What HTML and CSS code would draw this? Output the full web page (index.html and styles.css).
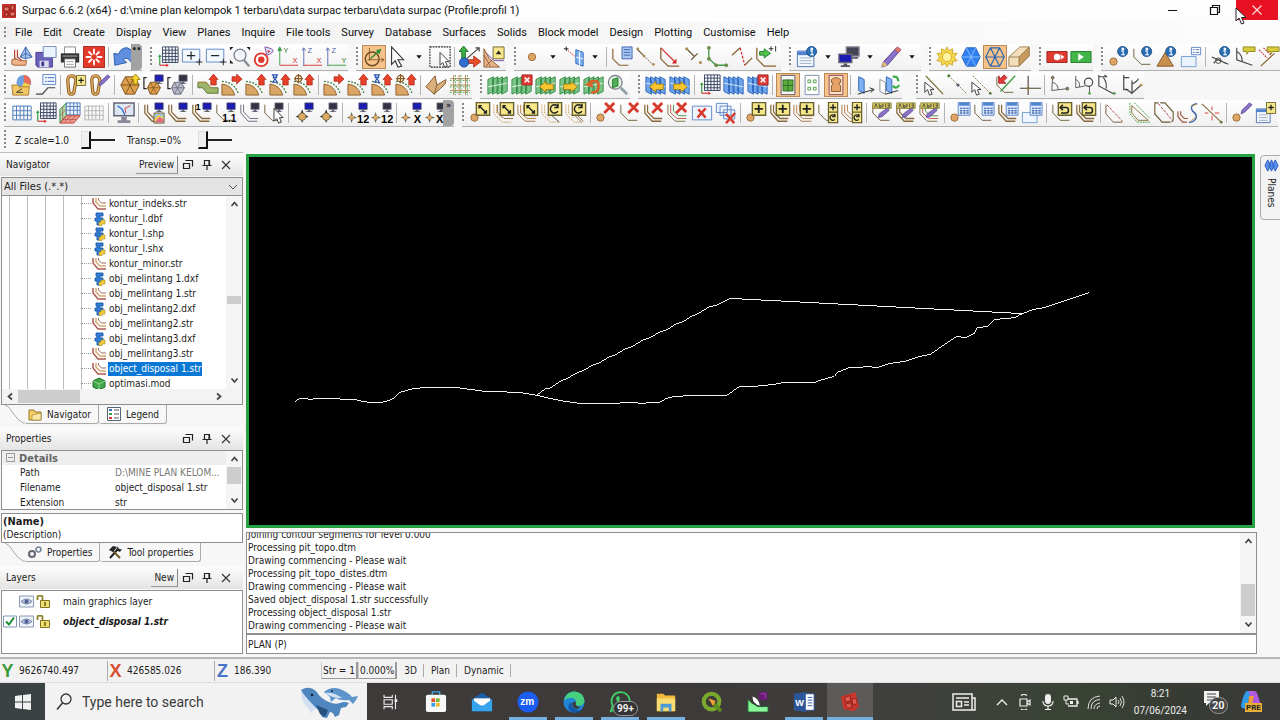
FILE: index.html
```html
<!DOCTYPE html>
<html lang="en">
<head>
<meta charset="utf-8">
<title>Surpac 6.6.2 (x64)</title>
<link rel="stylesheet" href="styles.css">
</head>
<body>
<svg class="defs" aria-hidden="true">
<defs>
<g id="ln" fill="none" stroke="#6b5a35"><path d="M2 3v9l8 8h10"/></g>
<g id="ln2" fill="none" stroke="#8a6a3c"><path d="M2 3v9l8 9h10M5 3v8l7 7h9" stroke-width="1.4"/></g>
<g id="ln3" fill="none"><path d="M1 3v10l8 8h11" stroke="#7a6a40"/><path d="M4 3v9l7 6h10" stroke="#c05040"/><path d="M7 3v7l6 5h8" stroke="#4a8a40"/></g>
<g id="lnb" fill="none"><path d="M1 3v10l8 8h11" stroke="#a07040"/><path d="M4 3v9l7 6h10M7 3v7l6 5h8" stroke="#b5793c"/></g>
<g id="lnd" fill="none" stroke="#c09040" stroke-dasharray="1.5 1"><path d="M1 3v10l9 9h10M4 3v9l6 6"/></g>
<g id="mon"><path d="M13 1h9v7h-9z" fill="#1c1cb4" stroke="#445" stroke-width=".8"/><path d="M16 8h3v2h2v1h-7v-1h2z" fill="#667"/></g>
<g id="mong"><path d="M13 1h9v7h-9z" fill="#334" stroke="#778" stroke-width=".8"/><path d="M16 8h3v2h2v1h-7v-1h2z" fill="#667"/></g>
<g id="badge"><path d="M8 .5h14.500v14H8z" fill="#f6e78a" stroke="#6a6130" stroke-width="1.5"/></g>
<g id="plus"><use href="#badge"/><path d="M15 3v9M10.500 7.500h9" stroke="#222" stroke-width="2"/></g>
<g id="diag"><use href="#badge"/><path d="M11 4l8 8M11 7V4h3M19 9v3h-3" fill="none" stroke="#222" stroke-width="1.5"/></g>
<g id="rot"><use href="#badge"/><path d="M18.500 10a4.500 4.500 0 1 1 0-5M18.500 2v4h-4" fill="none" stroke="#222" stroke-width="1.6"/></g>
<g id="undob"><use href="#badge"/><path d="M13 3l-3 3 3 3M10 6h7q2 0 2 3t-2 3h-6" fill="none" stroke="#222" stroke-width="1.7"/></g>
<g id="plusrot"><path d="M12.500 .5h10v22h-10zM12.500 11h10" fill="#f6e78a" stroke="#6a6130" stroke-width="1.4"/><path d="M17.500 2.500v6.500M14 6h7" stroke="#222" stroke-width="1.6"/><path d="M19.500 19a3 3 0 1 1 0-4M19.500 13v3h-3" fill="none" stroke="#222" stroke-width="1.4"/></g>
<g id="redx"><path d="M11 1l10 10M21 1L10 12" stroke="#d83a2c" stroke-width="3"/></g>
<g id="dot"><circle cx="6" cy="17" r="4" fill="#dfa565" stroke="#9a6a3a"/></g>
<g id="info"><circle cx="16" cy="6" r="5.500" fill="#2b6fb5" stroke="#1b4f8a"/><path d="M14.500 5.500h2v4M14.500 9.500h4M15.500 2.500h1.500v1.500h-1.500z" fill="none" stroke="#fff" stroke-width="1.2"/></g>
<g id="pencil"><path d="M2 23l2-6L17 3l4 3L8 21z" fill="#8a72c8" stroke="#54408c"/><path d="M16 4l3-3 4 3-3 3z" fill="#d77" stroke="#a55"/><path d="M2 23l2-6 4 4z" fill="#e8c070"/></g>
<g id="pens"><path d="M11 13l1-4 8-8 3 2-8 8z" fill="#8a72c8" stroke="#54408c" stroke-width=".8"/></g>
<g id="abc"><path d="M2 1h20v6H2z" fill="#d8cc5a" stroke="#8c8440"/><path d="M4 6l1.500-4L7 6M9 2v4h2V4H9M14 3h-2v2h2M16 2v4M18 2h2v4h-2M18 4h2" fill="none" stroke="#444" stroke-width=".9"/><path d="M8 17l1-4 8-6 3 2-8 7z" fill="#8a72c8" stroke="#54408c" stroke-width=".8"/></g>
<g id="tbl"><path d="M10 .5h13v14H10z" fill="#dbe8fa" stroke="#5b85c8"/><path d="M11 1h11v3H11z" fill="#4f82d0"/><path d="M12 7h2.500M15.500 7H18M19 7h2.500M12 9.500h2.500M15.500 9.500H18M19 9.500h2.500M12 12h2.500M15.500 12H18M19 12h2.500" stroke="#4a6fae" stroke-width="1.5"/></g>
<g id="axes" fill="none"><path d="M3 21V10" stroke="#35a045" stroke-width="1.3"/><path d="M1 12l2-3 2 3z" fill="#35a045"/><path d="M3 21h8" stroke="#d33" stroke-width="1.3"/><path d="M10 19l3 2-3 2z" fill="#d33"/></g>
<g id="gridd" fill="none" stroke="#33415f"><path d="M6 1h17v17H6zM9.500 1v17M13 1v17M16.500 1v17M20 1v17M6 4.500h17M6 8h17M6 11.500h17M6 15h17"/></g>
<g id="gridb" fill="none" stroke="#4878b8"><path d="M2 4.500h20v15H2zM6 4v15M10 4v15M14 4v15M18 4v15M2 9.500h20M2 14.500h20"/></g>
<g id="gridg" fill="none" stroke="#b4b4b4"><path d="M2 4.500h20v15H2zM6 4v15M10 4v15M14 4v15M18 4v15M2 9.500h20M2 14.500h20"/></g>
<g id="gpl"><path d="M1 6l6-3v16l-6 3zM6 6l6-3v16l-6 3zM11 6l6-3v16l-6 3zM16 6l6-3v16l-6 3z" fill="#7cc487" stroke="#2f8a42"/><path d="M1 14l21-4" stroke="#e6f6e6"/></g>
<g id="bpl"><path d="M1 3l6 3v16l-6-3zM6 3l6 3v16l-6-3zM11 3l6 3v16l-6-3zM16 3l6 3v16l-6-3z" fill="#6ea6ee" stroke="#2c62b8"/><path d="M1 10l21 4" stroke="#dbe9fb"/></g>
<g id="xbox"><path d="M12 1h11v11H12z" fill="#dd3b36" stroke="#a22"/><path d="M15 4l5 5M20 4l-5 5" stroke="#fff" stroke-width="1.7"/></g>
<g id="yl"><path d="M20 11h-8V8l-7 6 7 6v-3h8z" fill="#f8c52e" stroke="#96700f" stroke-width=".8"/></g>
<g id="yr"><path d="M5 11h8V8l7 6-7 6v-3H5z" fill="#f8c52e" stroke="#96700f" stroke-width=".8"/></g>
<g id="fan"><path d="M1 23V11q11 1 14 12z" fill="#dba564" stroke="#8a6130"/><path d="M1 8q14 1 18 14" fill="none" stroke="#3a7a3a" stroke-width="1.4" stroke-dasharray="2 1.5"/></g>
<g id="ru"><path d="M18 0l5 6h-2v6h-6V6h-2z" fill="#e8402a" stroke="#a32614" stroke-width=".7"/></g>
<g id="rr"><path d="M12 3h5V0l6 5.500L17 11V8h-5z" fill="#e8402a" stroke="#a32614" stroke-width=".7"/></g>
<g id="hg"><path d="M3 1h7M3 9h7M4 1l5 8M9 1L4 9M4 4h5" stroke="#2a52b0" stroke-width="1.3"/></g>
<g id="wh" fill="none" stroke="#8a5a20" stroke-width="1.3"><circle cx="6" cy="5" r="3.5"/><path d="M6 0v10M1 5h10"/></g>
<g id="hex"><path d="M7 3h10l5 9-5 10H7L2 12z" fill="#dfa04c" stroke="#7a5220"/><path d="M2 12h20M7 3l10 19M17 3L7 22" stroke="#7a5220" fill="none"/></g>
<g id="hexs"><path d="M8 9h7l4 6-4 7H8l-3-7z" fill="#dfa04c" stroke="#7a5220"/><path d="M5 15h14M8 9l7 13M15 9L8 22" stroke="#7a5220" stroke-width=".8"/><path d="M4 4H1v12h3" fill="none" stroke="#222" stroke-width="1.3"/></g>
<g id="hexg"><path d="M8 9h7l4 6-4 7H8l-3-7z" fill="#b9bccb" stroke="#667"/><path d="M5 15h14M8 9l7 13M15 9L8 22" stroke="#667" stroke-width=".8"/><path d="M4 4H1v12h3" fill="none" stroke="#222" stroke-width="1.3"/></g>
<g id="clip" fill="none"><path d="M3 7q0-5 4-5t5 5l-2 11q0 4-3 4t-3-4z" stroke="#8a5a20" stroke-width="3.6"/><path d="M3 7q0-5 4-5t5 5l-2 11q0 4-3 4t-3-4z" stroke="#e2b060" stroke-width="1.6"/></g>
<g id="str" fill="none"><path d="M1 1v5l5 6h8" stroke="#b05a50" stroke-width="1.5"/><path d="M4 1v4l4 4h6" stroke="#d8a870" stroke-width="1.5"/><path d="M6.500 1v2l3 3h4.500" stroke="#9a6a60"/></g>
<g id="fil"><path d="M4 1h7v3H8v2h3v3H8v4H5V9H3V6h2V4H4z" fill="#2f7cd6" stroke="#1c5aa8" stroke-width=".9"/><path d="M9 8h4v4h-3v1.500H7V10h2z" fill="#f2cf3a" stroke="#a88a1c" stroke-width=".6"/></g>
<g id="float" fill="none" stroke="#222" stroke-width="1.2"><path d="M3.500 1.500h7v6M1.500 4.500h6v5h-6z"/></g>
<g id="pin" fill="none" stroke="#222" stroke-width="1.2"><path d="M3.500 1.500h5v5h-5zM1.500 6.500h9M6 7v4M8 2v4"/></g>
<g id="cls" fill="none" stroke="#333" stroke-width="1.1"><path d="M2 2l8 8M10 2l-8 8"/></g>
<g id="up" fill="none" stroke="#444" stroke-width="1.7"><path d="M2.500 7l3-3.500 3 3.500"/></g>
<g id="dn" fill="none" stroke="#444" stroke-width="1.7"><path d="M2.500 3.500l3 3.500 3-3.500"/></g>
<g id="lt" fill="none" stroke="#444" stroke-width="1.7"><path d="M7 2.500l-3.500 3L7 8.500"/></g>
<g id="rt" fill="none" stroke="#444" stroke-width="1.7"><path d="M4 2.500l3.500 3-3.500 3"/></g>
<g id="arr"><path d="M5 1v19l4-4 3 7 4-1-4-7h6z" fill="#fff" stroke="#333" stroke-width="1.2"/></g>
<g id="arrs"><path d="M12 7v14l3-3 2 5 3-1-2-5h4z" fill="#fff" stroke="#333"/></g>
<g id="dia"><path d="M10 8l2 5 5 3-5 2-2 5-2-5-5-2 5-3z" fill="#333"/><circle cx="10" cy="16" r="4" fill="#e0aa60" stroke="#775"/></g>
<g id="dias"><path d="M5 11l1.500 4.500L11 17l-4.500 1.500L5 23l-1.500-4.500L0 17l3.500-1.500z" fill="#665"/><circle cx="5" cy="17" r="2.300" fill="#e0aa60"/></g>
<g id="eye"><path d="M.5.5h14v11H.5z" fill="#eef3fa" stroke="#8a9ab4"/><path d="M2 6q5.500-5 11 0-5.500 5-11 0z" fill="#b9c7de" stroke="#7486aa"/><circle cx="7.500" cy="6" r="2" fill="#4b5f92"/></g>
<g id="lock"><path d="M1.500 5V2q0-1.500 2.500-1.500T6.500 2v4" fill="none" stroke="#8c8428" stroke-width="1.8"/><path d="M4.500 5.500h9v7h-9z" fill="#efe070" stroke="#7c7424"/><path d="M9 7v4" stroke="#665c14" stroke-width="1.5"/></g>
<g id="ang" fill="none" stroke="#555"><path d="M4 3l-1 15 17-2M4 9q6 2 6 8"/><circle cx="4" cy="4" r="1.5" fill="#b08a50"/><circle cx="20" cy="16" r="1.5" fill="#7a9a60"/></g>
<g id="dd"><path d="M6 10h6l-3 4z" fill="#111"/></g>
</defs>
</svg>

<header class="titlebar">
  <svg class="app-icon" viewBox="0 0 14 14"><path d="M0 0h14v14H0z" fill="#c6332c"/><path d="M2 3h5v4H2zM9 1h3v5H9zM3 9h3v3H3zM8 8h5v4H8z" fill="#e57a70" stroke="#8c1c18"/></svg>
  <h1 class="title">Surpac 6.6.2 (x64) - d:\mine plan kelompok 1 terbaru\data surpac terbaru\data surpac (Profile:profil 1)</h1>
  <button class="win-btn" aria-label="Minimize"><svg viewBox="0 0 12 12"><path d="M1 6.500h9" stroke="#111"/></svg></button>
  <button class="win-btn" aria-label="Restore"><svg viewBox="0 0 12 12"><path d="M3.500 3V1.500h7v7H9M1.500 3.500h7v7h-7z" fill="none" stroke="#111" stroke-width="1.2"/></svg></button>
  <button class="win-btn close" aria-label="Close"><svg viewBox="0 0 12 12"><path d="M1.500 1.500l9 9M10.500 1.500l-9 9" stroke="#fbdada" stroke-width="1.2"/></svg></button>
  <svg class="pointer" viewBox="0 0 12 18"><path d="M1 1v13l3-3 2.500 6 2.500-1-2.500-5.500H11z" fill="#fff" stroke="#222"/></svg>
</header>

<nav class="menubar">
  <i class="grip"></i>
  <button>File</button><button>Edit</button><button>Create</button><button>Display</button><button>View</button><button>Planes</button><button>Inquire</button><button>File tools</button><button>Survey</button><button>Database</button><button>Surfaces</button><button>Solids</button><button>Block model</button><button>Design</button><button>Plotting</button><button>Customise</button><button>Help</button>
</nav>

<div class="toolrow">
  <div class="group"><i class="grip"></i>
    <button aria-label="Open"><svg viewBox="0 0 24 24"><path d="M4 4v9l5 5M7 4v8l5 4" fill="none" stroke="#b04030" stroke-width="1.3"/><path d="M16 1l7 11-7 2-6-2zM16 1v13M10 12l6-4 7 4" fill="#a9c6ee" stroke="#3b62b0"/><path d="M1 15q6-2 8 1h8l-1 5H4l-3-1z" fill="#f0b488" stroke="#a05a30"/></svg></button>
    <button aria-label="Save"><svg viewBox="0 0 24 24"><path d="M1 7h18v16H3l-2-2z" fill="#6a62b8" stroke="#3f3890"/><path d="M9 .5h14v12H9z" fill="#eaf2fc" stroke="#6f86b8"/><path d="M5 16h10v7H5z" fill="#dcdcf0"/><path d="M7 17h3v5H7z" fill="#3f3890"/></svg></button>
    <button aria-label="Print"><svg viewBox="0 0 24 24"><path d="M6 1h12v8H6z" fill="#fff" stroke="#888"/><path d="M2 8h20v10H2z" fill="#333"/><path d="M4 10h16v2H4z" fill="#777"/><path d="M6 14h12v9H6z" fill="#fff" stroke="#666"/><path d="M8 17h8M8 20h8" stroke="#999"/></svg></button>
    <button aria-label="Reset graphics"><svg viewBox="0 0 24 24"><path d="M.5.5h23v23H.5z" fill="#e43a2c" stroke="#a32218"/><path d="M12 3v6M12 15v6M3 12h6M15 12h6M6 6l4 4M14 14l4 4M18 6l-4 4M10 14l-4 4" stroke="#fff" stroke-width="2"/></svg></button>
    <i class="sep"></i>
    <button aria-label="Undo"><svg viewBox="0 0 24 24"><path d="M1 8l1 13 13-3-4-3q5-4 9 3 6-12-4-16-7-1-10 7z" fill="#5f8fe0" stroke="#2c56a8"/></svg></button>
    <b class="more">••</b>
  </div>
  <div class="group"><i class="grip"></i>
    <button aria-label="Grid axes"><svg viewBox="0 0 24 24"><use href="#gridd"/><use href="#axes"/></svg></button>
    <button aria-label="Zoom in"><svg viewBox="0 0 24 24"><path d="M1.500 3.500h19v14h-19z" fill="#f3f8ff" stroke="#5b85c8"/><path d="M11 6v9M6.500 10.500h9" stroke="#222" stroke-width="1.3"/><path d="M20 14v7M16.500 17.500h7" stroke="#222"/></svg></button>
    <button aria-label="Zoom out"><svg viewBox="0 0 24 24"><path d="M1.500 3.500h19v14h-19z" fill="#f3f8ff" stroke="#5b85c8"/><path d="M6.500 10.500h9" stroke="#222" stroke-width="1.3"/><path d="M20 14v7M16.500 17.500h7" stroke="#222"/></svg></button>
    <button aria-label="Zoom all"><svg viewBox="0 0 24 24"><circle cx="12" cy="10" r="6.5" fill="#f2f6fa" stroke="#778" stroke-width="1.3"/><path d="M16 15l6 7" stroke="#889" stroke-width="2.500"/><path d="M1 1h4L1 5zM23 1h-4l4 4zM1 19h4l-4-4z" fill="#222"/></svg></button>
    <button aria-label="Zoom to point"><svg viewBox="0 0 24 24"><circle cx="9" cy="15" r="7" fill="#fff" stroke="#e0382c" stroke-width="2"/><circle cx="9" cy="15" r="3.5" fill="#e0382c"/><path d="M13 1q10 2 9 5-4 4-7 4z" fill="#dfe4ff" stroke="#7a4a9a"/><path d="M16 4l3 2-3 2z" fill="#c33"/></svg></button>
    <button aria-label="Plan view"><svg viewBox="0 0 24 24"><path d="M3 21V4M1 5l2-4 2 4z" stroke="#35a045" fill="#35a045"/><path d="M3 21h20" stroke="#d33"/><text x="7" y="8" font-size="8" fill="#2a7a35">Y</text><text x="17" y="18" font-size="8" fill="#c33">X</text></svg></button>
    <button aria-label="Section view XZ"><svg viewBox="0 0 24 24"><path d="M3 22V2M1 5l2-3 2 3" stroke="#5b6fa8" fill="none"/><path d="M3 21h20" stroke="#d33"/><text x="7" y="8" font-size="8" fill="#55659a">Z</text><text x="17" y="18" font-size="8" fill="#c33">X</text></svg></button>
    <button aria-label="Section view YZ"><svg viewBox="0 0 24 24"><path d="M3 22V2M1 5l2-3 2 3" stroke="#5b6fa8" fill="none"/><path d="M3 21h20" stroke="#35a045"/><text x="7" y="8" font-size="8" fill="#55659a">Z</text><text x="18" y="18" font-size="8" fill="#2a7a35">Y</text></svg></button>
  </div>
  <div class="group"><i class="grip"></i>
    <button class="on" aria-label="Orbit"><svg viewBox="0 0 24 24"><circle cx="10" cy="14" r="7.5" fill="none" stroke="#6a4a20" stroke-width="1.5"/><path d="M7 16V2M5 15h18M20 13l3 2-3 2" stroke="#8a5a30" fill="none"/><path d="M8 14l9-8" stroke="#2f8a35" stroke-width="1.5"/><path d="M14 5l6-2-2 6z" fill="#2f8a35"/></svg></button>
    <button aria-label="Select"><svg viewBox="0 0 24 24"><use href="#arr"/></svg></button>
    <button class="drop" aria-label="Select options"><svg viewBox="0 0 18 24"><use href="#dd"/></svg></button>
    <button aria-label="Box select"><svg viewBox="0 0 24 24"><path d="M1 1h22v22H1z" fill="none" stroke="#222" stroke-width="1.2" stroke-dasharray="2 1"/><use href="#arrs"/></svg></button>
    <i class="sep"></i>
    <button aria-label="Move axes"><svg viewBox="0 0 24 24"><path d="M5 0l5 6H7v9H3V6H0z" fill="#3cae46" stroke="#1f7028"/><path d="M8 14L22 2M18 2h4v4" stroke="#444" fill="none" stroke-width="1.3"/><path d="M9 15h7v-4l8 6-8 6v-4H9z" fill="#e8502a" stroke="#a32"/><circle cx="5.500" cy="18" r="5" fill="#2f6fd0" stroke="#1c4a9a"/></svg></button>
    <button aria-label="Surface view"><svg viewBox="0 0 24 24"><path d="M1 3v20h17L7 14zM1 10l7 12M3 22l8-8" fill="#e9b48c" stroke="#8a5a30"/><path d="M4 8l8 8h11" stroke="#7a4aa0" fill="none"/><path d="M11 1h12v13H11z" fill="#f6e78a" stroke="#6a6130"/><path d="M14 9l3-4 3 4z" fill="#222"/></svg></button>
  </div>
  <div class="group roomy"><i class="grip"></i>
    <button aria-label="Point"><svg viewBox="0 0 24 24"><circle cx="12" cy="12" r="4" fill="#dfa565" stroke="#9a6a3a"/></svg></button>
    <button class="drop" aria-label="Point options"><svg viewBox="0 0 18 24"><use href="#dd"/></svg></button>
    <button aria-label="Section plane"><svg viewBox="0 0 24 24"><path d="M3 3l12 10" stroke="#d33" stroke-dasharray="2 1"/><path d="M1 3h5M3.500 .5v5" stroke="#222"/><path d="M14 4l8 3v15l-8-3z" fill="#7fb2f0" stroke="#2c62b8"/><path d="M18 6v15M14 12l8 2" stroke="#fff"/></svg></button>
    <button class="drop" aria-label="Plane options"><svg viewBox="0 0 18 24"><use href="#dd"/></svg></button>
    <i class="sep"></i>
    <button aria-label="Digitise"><svg viewBox="0 0 24 24"><path d="M2 3v11l7 7h10" fill="none" stroke="#8a6130" stroke-width="1.3"/><path d="M12 1h11v13H12z" fill="#a9c6ee" stroke="#3b62b0"/><path d="M14 4h7M14 7h7M14 10h7" stroke="#3b62b0"/></svg></button>
    <button aria-label="New segment"><svg viewBox="0 0 24 24"><path d="M2 3l8 8" stroke="#6b5a35" stroke-width="1.3"/><path d="M10 11l10 10" stroke="#6b5a35" stroke-dasharray="2 1"/><circle cx="3" cy="3" r="1.5" fill="#b08a50"/><circle cx="10" cy="11" r="1.5" fill="#b08a50"/><circle cx="20" cy="20" r="1.5" fill="#b08a50"/></svg></button>
    <button aria-label="Close segment"><svg viewBox="0 0 24 24"><path d="M2 2v12l8 8h12" fill="none" stroke="#8a6130" stroke-width="1.4"/><path d="M2 2l16 16" stroke="#d33" stroke-width="1.4"/><path d="M19 14v5h-5z" fill="#c22"/></svg></button>
    <button aria-label="Break segment"><svg viewBox="0 0 24 24"><path d="M4 3l9 9M9 15l7-7" stroke="#6b5a35" stroke-width="1.3"/><circle cx="19" cy="18" r="1.7" fill="#b08a50"/><circle cx="4" cy="3" r="1.7" fill="#b08a50"/></svg></button>
    <button aria-label="Join segment"><svg viewBox="0 0 24 24"><path d="M2 2v12l8 7h12" fill="none" stroke="#3f9a44" stroke-width="1.4"/><g fill="#5aa050" stroke="#7a6130" stroke-width=".6"><circle cx="2" cy="2" r="1.7"/><circle cx="2" cy="14" r="1.7"/><circle cx="10" cy="21" r="1.7"/><circle cx="21" cy="21" r="1.7"/></g></svg></button>
    <button aria-label="Insert point"><svg viewBox="0 0 24 24"><path d="M1 10l9-8M15 21l8-8" stroke="#8a6130" stroke-width="1.4"/><path d="M10 2l5 19" stroke="#d33" stroke-dasharray="3 1.5" stroke-width="1.4"/></svg></button>
    <button aria-label="Next string"><svg viewBox="0 0 24 24"><path d="M2 2v12l8 8h13" fill="none" stroke="#8a6130" stroke-width="1.4"/><path d="M5 6h5V3l7 5-7 5v-3H5z" fill="#4fc04a" stroke="#23802a"/><path d="M15 3h5M17.500 .5v5M22.500 0v6" stroke="#222"/></svg></button>
  </div>
  <div class="group"><i class="grip"></i>
    <button aria-label="Information"><svg viewBox="0 0 24 24"><path d="M1.500 5.500h18v17h-18z" fill="#f5f9ff" stroke="#4a6fae"/><path d="M2 6h17v4H2z" fill="#4f82d0"/><path d="M4 13h13M4 16h13M4 19h13" stroke="#9ab"/><use href="#info" x="1"/></svg></button>
    <button class="drop" aria-label="Information options"><svg viewBox="0 0 18 24"><use href="#dd"/></svg></button>
    <button aria-label="Displays"><svg viewBox="0 0 24 24"><path d="M9 1h14v10H9z" fill="#445" stroke="#889" stroke-width="1.5"/><path d="M15 12h7v2h-7z" fill="#667"/><path d="M1 9h14v9H1z" fill="#1c1cb4" stroke="#667" stroke-width="1.5"/><path d="M6 19h4v2h3v2H3v-2h3z" fill="#556"/></svg></button>
    <button class="drop" aria-label="Display options"><svg viewBox="0 0 18 24"><use href="#dd"/></svg></button>
    <button aria-label="Edit"><svg viewBox="0 0 24 24"><use href="#pencil"/></svg></button>
    <button class="drop" aria-label="Edit options"><svg viewBox="0 0 18 24"><use href="#dd"/></svg></button>
  </div>
  <div class="group"><i class="grip"></i>
    <button aria-label="Light"><svg viewBox="0 0 24 24"><path d="M12 1l2 4 4-2v5l5 0-3 4 3 4-5 1v4l-4-2-2 4-2-4-4 2v-4l-5-1 3-4-3-4 5 0V3l4 2z" fill="#f5d84a" stroke="#c49a1c" stroke-width=".8"/><circle cx="12" cy="12" r="5" fill="#fff3a0" stroke="#d0a82a"/></svg></button>
    <button aria-label="Shaded"><svg viewBox="0 0 24 24"><path d="M7 2h10l5 10-5 10H7L2 12z" fill="#2f80ee" stroke="#1c58b8"/><path d="M2 12h20M7 2l10 20M17 2L7 22" stroke="#8fc0ff"/></svg></button>
    <button class="on" aria-label="Wireframe"><svg viewBox="0 0 24 24"><path d="M7 2h10l5 10-5 10H7L2 12zM2 12h20M7 2l10 20M17 2L7 22" fill="none" stroke="#2c66b0" stroke-width="1.3"/></svg></button>
    <button aria-label="Solid block"><svg viewBox="0 0 24 24"><path d="M1 12L13 1h10v10L12 22H1z" fill="#f2dfba" stroke="#9a7a48"/><path d="M12 12L23 1v10L12 22z" fill="#c89a60" stroke="#9a7a48"/><path d="M1 12h11" stroke="#9a7a48"/></svg></button>
  </div>
  <div class="group"><i class="grip"></i>
    <button aria-label="Record macro"><svg viewBox="0 0 24 24"><path d="M1 6h22v12H1z" fill="#df3a30" stroke="#9c2018"/><circle cx="12" cy="12" r="3.5" fill="#fff"/><path d="M16 9l4 3-4 3z" fill="#fff"/></svg></button>
    <button aria-label="Play macro"><svg viewBox="0 0 24 24"><path d="M1 6h22v12H1z" fill="#43b649" stroke="#237a2a"/><path d="M9 8l6 4-6 4z" fill="#fff"/></svg></button>
  </div>
  <div class="group"><i class="grip"></i>
    <button aria-label="Point info"><svg viewBox="0 0 24 24"><use href="#dot"/><use href="#info"/></svg></button>
    <button aria-label="Segment info"><svg viewBox="0 0 24 24"><use href="#ln"/><use href="#info"/></svg></button>
    <button aria-label="Triangle info"><svg viewBox="0 0 24 24"><path d="M10 7l9 15H1z" fill="#c98f4e" stroke="#7f5526"/><use href="#info"/></svg></button>
    <button aria-label="Layer info"><svg viewBox="0 0 24 24"><path d="M1.500 11.500h16v11h-16z" fill="#eaf2fc" stroke="#6f9ad0"/><path d="M12.500 1.500h10v8h-10z" fill="#fff" stroke="#5b85c8"/><path d="M14 4h2M14 7h2M17 4h4M17 7h4" stroke="#4a6fae"/></svg></button>
    <i class="sep"></i>
    <button aria-label="Bearing"><svg viewBox="0 0 24 24"><path d="M2 12l18 8M4 19q4-6 8-3t6 3" fill="none" stroke="#444" stroke-width="1.2"/><circle cx="9" cy="16" r="3" fill="none" stroke="#444"/><use href="#info"/></svg></button>
    <button aria-label="Angle label"><svg viewBox="0 0 24 24"><path d="M3 2v13l17 6M3 6q6 3 6 11" fill="none" stroke="#444" stroke-width="1.2"/><path d="M10 1h13v5h-7l-2 3V6h-4z" fill="#d8cc3a" stroke="#8c8420"/></svg></button>
    <button aria-label="Dimension"><svg viewBox="0 0 24 24"><path d="M3 22L18 8" stroke="#8a6130" stroke-width="1.3"/><path d="M1 4l9 9M6 2l8 8" stroke="#c44" stroke-dasharray="2 1" stroke-width="1.3"/><path d="M10 1h13v5h-7l-2 3V6h-4z" fill="#d8cc3a" stroke="#8c8420"/></svg></button>
  </div>
</div>

<div class="toolrow">
  <div class="group"><i class="grip"></i>
    <button aria-label="Open chart"><svg viewBox="0 0 24 24"><circle cx="14" cy="9" r="8" fill="#6fa0e0"/><path d="M14 9V1a8 8 0 0 1 7 11z" fill="#ec6a5a"/><path d="M14 9l7 3a8 8 0 0 1-10 4z" fill="#f3d24a"/><path d="M1 12h6l2 2h11l-1 9H2z" fill="#f2c766" stroke="#a87a28"/><path d="M6 20l6-4M6 20h7" stroke="#333"/></svg></button>
    <button aria-label="Section properties"><svg viewBox="0 0 24 24"><path d="M8.500 .5h14v11h-14z" fill="#eef5ff" stroke="#5b85c8"/><path d="M11 4h2M11 8h2M14 4h7M14 8h7" stroke="#3b62b0"/><path d="M1 22h7l6-7h8" fill="none" stroke="#444" stroke-width="1.3"/></svg></button>
    <i class="sep"></i>
    <button aria-label="Add link"><svg viewBox="0 0 24 24"><use href="#clip"/><path d="M12.500 1.500h10v11h-10z" fill="#f6e78a" stroke="#6a6130"/><path d="M17.500 4v6M14.500 7h6" stroke="#222" stroke-width="1.3"/></svg></button>
    <button aria-label="Edit link"><svg viewBox="0 0 24 24"><use href="#clip"/><use href="#pens"/></svg></button>
    <i class="sep"></i>
    <button aria-label="Raise solid"><svg viewBox="0 0 24 24"><use href="#hex"/><path d="M18 0l5 6h-3v5h-4V6h-3z" fill="#f8d42e" stroke="#a08010"/></svg></button>
    <button aria-label="Display solid"><svg viewBox="0 0 24 24"><use href="#hexs"/><use href="#mon"/></svg></button>
    <button aria-label="Hide solid"><svg viewBox="0 0 24 24"><use href="#hexg"/><use href="#mong"/></svg></button>
    <i class="sep"></i>
    <button aria-label="Extend up"><svg viewBox="0 0 24 24"><path d="M1 9h9l5 6h8v6H11L6 15H1z" fill="#9db56a" stroke="#5c7430"/><path d="M1 9h9l5 6" stroke="#c08a40" fill="none"/><use href="#ru"/></svg></button>
    <button aria-label="Expand right"><svg viewBox="0 0 24 24"><use href="#fan"/><use href="#rr"/></svg></button>
    <button aria-label="Expand up"><svg viewBox="0 0 24 24"><use href="#fan"/><use href="#ru"/></svg></button>
    <button aria-label="Timed expand"><svg viewBox="0 0 24 24"><use href="#fan"/><use href="#ru"/><use href="#hg"/></svg></button>
    <button aria-label="Wheel expand"><svg viewBox="0 0 24 24"><use href="#fan"/><use href="#ru"/><use href="#wh"/></svg></button>
    <i class="sep"></i>
    <button aria-label="Contract right"><svg viewBox="0 0 24 24"><use href="#fan"/><use href="#rr"/></svg></button>
    <button aria-label="Contract up"><svg viewBox="0 0 24 24"><use href="#fan"/><use href="#ru"/></svg></button>
    <button aria-label="Timed contract"><svg viewBox="0 0 24 24"><use href="#fan"/><use href="#ru"/><use href="#hg"/></svg></button>
    <button aria-label="Wheel contract"><svg viewBox="0 0 24 24"><use href="#fan"/><use href="#ru"/><use href="#wh"/></svg></button>
    <i class="sep"></i>
    <button aria-label="Fold surface"><svg viewBox="0 0 24 24"><path d="M1 14L11 2l2 10 10-6-1 5-12 11z" fill="#d9b07c" stroke="#7f5526"/><path d="M10 22l3-10" fill="none" stroke="#7f5526"/></svg></button>
    <button aria-label="Grid strings"><svg viewBox="0 0 24 24"><path d="M5 1v22M11 1v22M18 1v22M1 5h22M1 12h22M1 18h22" stroke="#b08a50"/><path d="M7 1v22M13 1v22M20 1v22M1 7h22M1 14h22M1 20h22" stroke="#4a9a50" stroke-dasharray="2 1.5"/></svg></button>
  </div>
  <div class="group"><i class="grip"></i>
    <button aria-label="Sections"><svg viewBox="0 0 24 24"><use href="#gpl"/></svg></button>
    <button aria-label="Close sections"><svg viewBox="0 0 24 24"><use href="#gpl"/><use href="#xbox"/></svg></button>
    <button aria-label="Previous section"><svg viewBox="0 0 24 24"><use href="#gpl"/><use href="#yl"/></svg></button>
    <button aria-label="Next section"><svg viewBox="0 0 24 24"><use href="#gpl"/><use href="#yr"/></svg></button>
    <button aria-label="Reverse sections"><svg viewBox="0 0 24 24"><use href="#gpl"/><path d="M7 9q10-4 10 4t-8 7" fill="none" stroke="#d8622a" stroke-width="3"/><path d="M2 12l8-6 1 9z" fill="#d8622a"/></svg></button>
    <button aria-label="Find section"><svg viewBox="0 0 24 24"><circle cx="9" cy="9" r="7.5" fill="#dff3df" stroke="#778" stroke-width="1.3"/><path d="M6 6l6-2v9l-6 2z" fill="#4fae5a" stroke="#2a7a35"/><path d="M15 15l7 7" stroke="#8fa0a8" stroke-width="3"/></svg></button>
  </div>
  <div class="group far"><i class="grip"></i>
    <button aria-label="Previous plane"><svg viewBox="0 0 24 24"><use href="#bpl"/><use href="#yl"/></svg></button>
    <button aria-label="Next plane"><svg viewBox="0 0 24 24"><use href="#bpl"/><use href="#yr"/></svg></button>
    <i class="sep"></i>
    <button aria-label="Plane grid"><svg viewBox="0 0 24 24"><use href="#gridd"/><use href="#axes"/></svg></button>
    <button aria-label="Planes"><svg viewBox="0 0 24 24"><use href="#bpl"/></svg></button>
    <button aria-label="Close planes"><svg viewBox="0 0 24 24"><use href="#bpl"/><use href="#xbox"/></svg></button>
    <i class="sep"></i>
    <button class="on" aria-label="Tile view"><svg viewBox="0 0 24 24"><path d="M4.500 1.500h15v21h-15z" fill="#f4f7f4" stroke="#556"/><path d="M6.500 6.500h11v12h-11z" fill="#5aae3f" stroke="#2f6a20"/><path d="M12 6v13M6 12.500h12" stroke="#2f6a20"/></svg></button>
    <button aria-label="Corner view"><svg viewBox="0 0 24 24"><path d="M4.500 1.500h15v21h-15z" fill="#fff" stroke="#78a"/><path d="M7.500 6.500h3v3h-3zM13.500 6.500h3v3h-3zM7.500 14.500h3v3h-3zM13.500 14.500h3v3h-3z" fill="none" stroke="#4a9a3a"/></svg></button>
    <button class="on" aria-label="Outline view"><svg viewBox="0 0 24 24"><path d="M4.500 1.500h15v21h-15z" fill="#fbe3c4" stroke="#846"/><path d="M7 19v-6l2-3q-3 0-2-4 5-4 10 0 1 4-2 4l2 3v6z" fill="#e8a468" stroke="#7f5526"/></svg></button>
    <i class="sep"></i>
    <button aria-label="Plane move"><svg viewBox="0 0 24 24"><path d="M4 3l6 3v15l-6-3z" fill="#7fb2f0" stroke="#2c62b8"/><path d="M3 22l17-5M16 15l5 2-4 3" fill="none" stroke="#222"/></svg></button>
    <button aria-label="Plane swap"><svg viewBox="0 0 24 24"><path d="M1 6l6 3v13l-6-3z" fill="#fff" stroke="#888"/><path d="M8 3l6 3v15l-6-3z" fill="#7fb2f0" stroke="#2c62b8"/><path d="M15 3q6-1 6 5M22 12q-3 5-7 1" fill="none" stroke="#3cae46" stroke-width="2.5"/><path d="M7 22l14-4" stroke="#222"/></svg></button>
  </div>
  <div class="group"><i class="grip"></i>
    <button aria-label="Select line"><svg viewBox="0 0 24 24"><path d="M3 2l19 20" stroke="#7a6a30" stroke-width="1.4"/><path d="M2 9v11l3-3 2 6 3-1-2-5h4z" fill="#fff" stroke="#333"/></svg></button>
    <button aria-label="Point on line"><svg viewBox="0 0 24 24"><path d="M2 2l20 20" stroke="#7a6a30" stroke-dasharray="2 1.5"/><circle cx="12" cy="12" r="1.7" fill="#556"/><circle cx="2" cy="2" r="1.7" fill="#5a7a40"/></svg></button>
    <button aria-label="Pick point"><svg viewBox="0 0 24 24"><path d="M2 2l20 20" stroke="#7a6a30" stroke-dasharray="2 1.5"/><path d="M1 9v11l3-3 2 6 3-1-2-5h4z" fill="#fff" stroke="#333"/><circle cx="21" cy="21" r="1.5" fill="#5a7a40"/></svg></button>
    <button aria-label="Snap"><svg viewBox="0 0 24 24"><use href="#ln"/><path d="M22 2L6 19" stroke="#3f9a44" stroke-width="1.5"/><path d="M4 2v8h8l-3-2 4-4-3-3-4 4z" fill="#e03a3a" stroke="#a22"/></svg></button>
    <button aria-label="Cross"><svg viewBox="0 0 24 24"><path d="M10 2v21M1 15.500h23" stroke="#4a4432" stroke-width="1.2"/><circle cx="10" cy="15.500" r="1.5" fill="#8a7a40"/></svg></button>
    <i class="sep"></i>
    <button aria-label="Angle"><svg viewBox="0 0 24 24"><use href="#ang"/></svg></button>
    <button aria-label="Turn angle"><svg viewBox="0 0 24 24"><path d="M3 2v13l10-2M3 6q5 2 4 8M18 13v9" fill="none" stroke="#555"/><circle cx="17" cy="9" r="4.500" fill="none" stroke="#444" stroke-width="1.3"/><circle cx="18" cy="21" r="1.5" fill="#5aa050"/></svg></button>
    <button aria-label="Deflection"><svg viewBox="0 0 24 24"><path d="M2 1v12l17 9M2 3h9M7 4q4 5 3 12M8 1l3 2" fill="none" stroke="#444" stroke-width="1.2"/><circle cx="19" cy="21" r="1.5" fill="#5aa050"/></svg></button>
    <button aria-label="Offset angle"><svg viewBox="0 0 24 24"><path d="M3 1v16h5M3 4h6M12 7v14l10-9M12 11q6-3 7-6M5 16l7 5" fill="none" stroke="#444" stroke-width="1.3"/><circle cx="22" cy="12" r="1.5" fill="#b08a50"/></svg></button>
  </div>
</div>

<div class="toolrow">
  <div class="group"><i class="grip"></i>
    <button aria-label="2D grid"><svg viewBox="0 0 24 24"><use href="#gridb"/></svg></button>
    <button aria-label="Axis grid"><svg viewBox="0 0 24 24"><use href="#gridd"/><use href="#axes"/></svg></button>
    <button aria-label="3D grid"><svg viewBox="0 0 24 24"><path d="M1 8l7-7v14l-7 8z" fill="#a9dca9" stroke="#2f8a42"/><path d="M8 1h15v13H8zM12 1v13M16 1v13M20 1v13M8 5h15M8 9h15" fill="#eef4ff" stroke="#4878b8"/><path d="M8 15h15l-7 8H1z" fill="#ee9a90" stroke="#c0392b"/><path d="M4 5v14M13 15l-7 7M18 15l-7 7M4 19h15M1 15l7-7" stroke="#a44" stroke-width=".7"/></svg></button>
    <button aria-label="Hide grid"><svg viewBox="0 0 24 24"><use href="#gridg"/></svg></button>
    <i class="sep"></i>
    <button aria-label="Display plan"><svg viewBox="0 0 24 24"><path d="M1 1h22v14H1z" fill="#dbe8f4" stroke="#667" stroke-width="1.6"/><path d="M5 4l5 4 3 6" stroke="#2f6fd0" fill="none" stroke-width="1.5"/><path d="M19 4l-6 3 1 5" stroke="#d33" fill="none"/><path d="M9 16h6v4h4v3H5v-3h4z" fill="#889"/></svg></button>
    <i class="sep"></i>
    <button aria-label="Colour strings"><svg viewBox="0 0 24 24"><use href="#ln2"/><path d="M12 12h11v11H12z" fill="#f3d24a" stroke="#556"/><path d="M13 18l4-4 5 3v-4h-9z" fill="#8fc8f0"/><path d="M13 22l5-6 4 3v3z" fill="#e06a8a"/><use href="#mon"/></svg></button>
    <button aria-label="Display strings"><svg viewBox="0 0 24 24"><use href="#ln2"/><use href="#mon"/></svg></button>
    <button aria-label="String numbers"><svg viewBox="0 0 24 24"><use href="#ln2"/><use href="#mon"/><text x="5" y="9" font-size="10" font-weight="bold">1</text></svg></button>
    <button aria-label="Segment numbers"><svg viewBox="0 0 24 24"><use href="#ln"/><use href="#mon"/><text x="8" y="22" font-size="11" font-weight="bold">1.1</text></svg></button>
    <button aria-label="Hide strings"><svg viewBox="0 0 24 24"><path d="M2 3v9l8 9h10M5 3v8l7 7h9" fill="none" stroke="#667"/><use href="#mong"/></svg></button>
    <button aria-label="Pick string"><svg viewBox="0 0 24 24"><use href="#ln"/><use href="#mong"/><use href="#arrs"/></svg></button>
    <i class="sep"></i>
    <button aria-label="Display markers"><svg viewBox="0 0 24 24"><use href="#dia"/><use href="#mon"/></svg></button>
    <button aria-label="Hide markers"><svg viewBox="0 0 24 24"><use href="#dia"/><use href="#mong"/></svg></button>
    <i class="sep"></i>
    <button aria-label="Point numbers"><svg viewBox="0 0 24 24"><use href="#dias"/><use href="#mon"/><text x="11" y="23" font-size="12" font-weight="bold">12</text></svg></button>
    <button aria-label="Hide point numbers"><svg viewBox="0 0 24 24"><use href="#dias"/><use href="#mong"/><text x="11" y="23" font-size="12" font-weight="bold">12</text></svg></button>
    <i class="sep"></i>
    <button aria-label="Point attributes"><svg viewBox="0 0 24 24"><use href="#dias"/><use href="#mon"/><text x="14" y="23" font-size="12" font-weight="bold">X</text></svg></button>
    <button aria-label="Hide attributes"><svg viewBox="0 0 24 24"><use href="#dias"/><use href="#mong"/><text x="12" y="23" font-size="12" font-weight="bold">X</text></svg></button>
    <b class="more">»</b>
  </div>
  <div class="group"><i class="grip"></i>
    <button aria-label="Move point"><svg viewBox="0 0 24 24"><use href="#dot"/><use href="#diag"/></svg></button>
    <button aria-label="Move segment"><svg viewBox="0 0 24 24"><path d="M5 3v8l7 7h10" fill="none" stroke="#8a6a3c"/><use href="#lnd"/><use href="#diag"/></svg></button>
    <button aria-label="Move string"><svg viewBox="0 0 24 24"><use href="#lnb"/><use href="#diag"/></svg></button>
    <button aria-label="Rotate segment"><svg viewBox="0 0 24 24"><use href="#lnd"/><path d="M11 14l9 8" stroke="#444"/><use href="#rot"/></svg></button>
    <button aria-label="Rotate string"><svg viewBox="0 0 24 24"><use href="#lnd"/><path d="M9 13l9 9M12 13l8 8" stroke="#864"/><use href="#rot"/></svg></button>
    <i class="sep"></i>
    <button aria-label="Delete point"><svg viewBox="0 0 24 24"><use href="#dot"/><use href="#redx"/></svg></button>
    <button aria-label="Delete segment"><svg viewBox="0 0 24 24"><use href="#ln"/><use href="#redx"/></svg></button>
    <button aria-label="Delete string"><svg viewBox="0 0 24 24"><use href="#ln2"/><use href="#redx"/></svg></button>
    <button aria-label="Delete strings"><svg viewBox="0 0 24 24"><use href="#ln3"/><use href="#redx"/></svg></button>
    <button aria-label="Delete layer"><svg viewBox="0 0 24 24"><path d="M1.500 4.500h21v15h-21z" fill="#eef5ff" stroke="#5b85c8"/><path d="M8 8l8 9M16 7l-9 10" stroke="#d83a2c" stroke-width="2.600"/></svg></button>
    <button aria-label="Delete layers"><svg viewBox="0 0 24 24"><path d="M1.500 1.500h12v10h-12zM5.500 4.500h12v10h-12zM9.500 8.500h12v10h-12z" fill="#eef5ff" stroke="#5b85c8"/><path d="M12 13l9 10M22 12l-10 11" stroke="#d83a2c" stroke-width="2.600"/></svg></button>
    <i class="sep"></i>
    <button aria-label="Add point"><svg viewBox="0 0 24 24"><use href="#dot"/><use href="#plus"/></svg></button>
    <button aria-label="Add segment"><svg viewBox="0 0 24 24"><use href="#ln2"/><use href="#plus"/></svg></button>
    <button aria-label="Add string"><svg viewBox="0 0 24 24"><use href="#lnb"/><use href="#plus"/></svg></button>
    <button aria-label="Copy rotate segment"><svg viewBox="0 0 24 24"><use href="#ln"/><use href="#plusrot"/></svg></button>
    <button aria-label="Copy rotate string"><svg viewBox="0 0 24 24"><use href="#lnb"/><use href="#plusrot"/></svg></button>
    <i class="sep"></i>
    <button aria-label="Rename segment"><svg viewBox="0 0 24 24"><use href="#ln"/><use href="#abc"/></svg></button>
    <button aria-label="Rename string"><svg viewBox="0 0 24 24"><use href="#ln2"/><use href="#abc"/></svg></button>
    <button aria-label="Rename strings"><svg viewBox="0 0 24 24"><use href="#ln3"/><use href="#abc"/></svg></button>
    <i class="sep"></i>
    <button aria-label="Point table"><svg viewBox="0 0 24 24"><use href="#dot"/><use href="#tbl"/></svg></button>
    <button aria-label="Segment table"><svg viewBox="0 0 24 24"><use href="#ln"/><use href="#tbl"/></svg></button>
    <button aria-label="String table"><svg viewBox="0 0 24 24"><use href="#ln2"/><use href="#tbl"/></svg></button>
    <button aria-label="Layer table"><svg viewBox="0 0 24 24"><path d="M1.500 11.500h16v11h-16z" fill="#eef5ff" stroke="#6f9ad0"/><use href="#tbl"/></svg></button>
    <i class="sep"></i>
    <button aria-label="Reverse segment"><svg viewBox="0 0 24 24"><use href="#ln"/><use href="#undob"/></svg></button>
    <button aria-label="Reverse string"><svg viewBox="0 0 24 24"><use href="#ln2"/><use href="#undob"/></svg></button>
    <i class="sep"></i>
    <button aria-label="Open polygon"><svg viewBox="0 0 24 24"><path d="M1 3v10l8 9h10" fill="none" stroke="#6b5a35"/><path d="M2 3l17 18" stroke="#a33" stroke-dasharray="3 1.5"/></svg></button>
    <button aria-label="Offset polygon"><svg viewBox="0 0 24 24"><path d="M3 4v8l7 8h11z" fill="none" stroke="#8a6a3c"/><path d="M1 1v12l8 9h14M6 1l17 17" fill="none" stroke="#3a9a3a" stroke-dasharray="2 1"/></svg></button>
    <button aria-label="Clip polygon"><svg viewBox="0 0 24 24"><path d="M6 1H2v12l8 9h9M8 1h5l9 10v9l-2 2" fill="none" stroke="#6b5a35" stroke-width="1.2"/><path d="M6 2l15 18" stroke="#a33" stroke-dasharray="3 1.5"/></svg></button>
    <button aria-label="Smooth"><svg viewBox="0 0 24 24"><path d="M1 10v6l5 6h5M4 10v4l4 4h4" fill="none" stroke="#a05a40" stroke-width="1.3"/><path d="M22 2q-9 1-5 8 6 4 3 9-3 4-7 3" fill="none" stroke="#3a6ab0" stroke-width="1.6"/><path d="M15 5l7-3M14 22l7-6" fill="none" stroke="#c09040"/></svg></button>
    <button aria-label="Intersect"><svg viewBox="0 0 24 24"><path d="M1 2l21 20" stroke="#8a6a3c" stroke-width="1.2"/><path d="M12 5v4M12 15v5M4 12h4M15 12h5" stroke="#d33"/><circle cx="22" cy="22" r="1.5" fill="#5a7a40"/></svg></button>
    <i class="sep"></i>
    <button aria-label="Edit point"><svg viewBox="0 0 24 24"><use href="#dot"/><use href="#pens"/></svg></button>
    <button aria-label="Add properties"><svg viewBox="0 0 24 24"><path d="M1.500 7.500h15v15h-15z" fill="#f5f9ff" stroke="#4a6fae"/><path d="M2 8h14v3H2z" fill="#4f82d0"/><path d="M4 14h10M4 17h10M4 20h10" stroke="#9ab"/><path d="M12.500 .5h10v12h-10z" fill="#f6e78a" stroke="#6a6130"/><path d="M17.500 3v6M14.500 6h6" stroke="#222" stroke-width="1.4"/></svg></button>
  </div>
</div>

<div class="sliders">
  <i class="grip"></i>
  <label for="zscale">Z scale=1.0</label><input id="zscale" type="range" min="0" max="10" value="0">
  <label for="transp">Transp.=0%</label><input id="transp" type="range" min="0" max="10" value="0">
</div>

<main class="work">
  <aside class="dock">
    <div class="pane-head"><h2>Navigator</h2><button class="text-btn">Preview</button>
      <button class="ico" aria-label="Float"><svg viewBox="0 0 12 12"><use href="#float"/></svg></button><button class="ico" aria-label="Pin"><svg viewBox="0 0 12 12"><use href="#pin"/></svg></button><button class="ico" aria-label="Close pane"><svg viewBox="0 0 12 12"><use href="#cls"/></svg></button></div>
    <div class="combo"><select aria-label="File filter"><option>All Files (.*.*)</option></select><svg viewBox="0 0 12 10"><path d="M2 3l4 4 4-4" fill="none" stroke="#555"/></svg></div>
    <div class="tree">
      <div class="tree-body">
        <ul>
          <li><svg viewBox="0 0 14 14"><use href="#str"/></svg><span>kontur_indeks.str</span></li>
          <li><svg viewBox="0 0 14 14"><use href="#fil"/></svg><span>kontur_l.dbf</span></li>
          <li><svg viewBox="0 0 14 14"><use href="#fil"/></svg><span>kontur_l.shp</span></li>
          <li><svg viewBox="0 0 14 14"><use href="#fil"/></svg><span>kontur_l.shx</span></li>
          <li><svg viewBox="0 0 14 14"><use href="#str"/></svg><span>kontur_minor.str</span></li>
          <li><svg viewBox="0 0 14 14"><use href="#fil"/></svg><span>obj_melintang 1.dxf</span></li>
          <li><svg viewBox="0 0 14 14"><use href="#str"/></svg><span>obj_melintang 1.str</span></li>
          <li><svg viewBox="0 0 14 14"><use href="#fil"/></svg><span>obj_melintang2.dxf</span></li>
          <li><svg viewBox="0 0 14 14"><use href="#str"/></svg><span>obj_melintang2.str</span></li>
          <li><svg viewBox="0 0 14 14"><use href="#fil"/></svg><span>obj_melintang3.dxf</span></li>
          <li><svg viewBox="0 0 14 14"><use href="#str"/></svg><span>obj_melintang3.str</span></li>
          <li class="selected"><svg viewBox="0 0 14 14"><use href="#str"/></svg><span>object_disposal 1.str</span></li>
          <li><svg viewBox="0 0 14 14"><path d="M1 4l6-3 6 3v6l-6 3-6-3z" fill="#3fa548" stroke="#226a2a"/><path d="M1 4l6 3 6-3M7 7v6" fill="none" stroke="#8fd890"/></svg><span>optimasi.mod</span></li>
        </ul>
        <div class="vscroll"><svg viewBox="0 0 11 11"><use href="#up"/></svg><i class="tick"></i><svg viewBox="0 0 11 11"><use href="#dn"/></svg></div>
      </div>
      <div class="hscroll"><svg viewBox="0 0 11 11"><use href="#lt"/></svg><i></i><svg viewBox="0 0 11 11"><use href="#rt"/></svg></div>
    </div>
    <div class="tabs"><svg class="slant" viewBox="0 0 24 19"><path d="M5 0q4 1 8 8t11 10.500" fill="none" stroke="#aaa"/></svg>
      <button class="tab"><svg viewBox="0 0 14 14"><path d="M1 3h5l1 2h6v8H1z" fill="#f3cf62" stroke="#96752a"/><path d="M4 8l9-2v7H4z" fill="#fbe7a6" stroke="#96752a" stroke-width=".6"/></svg>Navigator</button>
      <button class="tab"><svg viewBox="0 0 14 14"><path d="M.5.5h13v13H.5z" fill="#fff" stroke="#567"/><path d="M2 3h3" stroke="#3a6ad0" stroke-width="2"/><path d="M2 7h3" stroke="#3aa04a" stroke-width="2"/><path d="M2 11h3" stroke="#d33" stroke-width="2"/><path d="M7 3h5M7 7h5M7 11h5" stroke="#555"/></svg>Legend</button></div>

    <div class="pane-head"><h2>Properties</h2>
      <button class="ico" aria-label="Float"><svg viewBox="0 0 12 12"><use href="#float"/></svg></button><button class="ico" aria-label="Pin"><svg viewBox="0 0 12 12"><use href="#pin"/></svg></button><button class="ico" aria-label="Close pane"><svg viewBox="0 0 12 12"><use href="#cls"/></svg></button></div>
    <div class="props">
      <table>
        <tr><th colspan="2"><svg viewBox="0 0 9 9"><path d="M.5.5h8v8h-8zM2 4.500h5" fill="none" stroke="#999"/></svg>Details</th></tr>
        <tr><td>Path</td><td class="dim">D:\MINE PLAN KELOM...</td></tr>
        <tr><td>Filename</td><td>object_disposal 1.str</td></tr>
        <tr><td>Extension</td><td>str</td></tr>
      </table>
      <div class="vscroll"><svg viewBox="0 0 11 11"><use href="#up"/></svg><i class="block"></i><svg viewBox="0 0 11 11"><use href="#dn"/></svg></div>
    </div>
    <div class="desc"><b>(Name)</b><span>(Description)</span></div>
    <div class="tabs"><svg class="slant" viewBox="0 0 24 19"><path d="M5 0q4 1 8 8t11 10.500" fill="none" stroke="#aaa"/></svg>
      <button class="tab"><svg viewBox="0 0 14 14"><circle cx="4" cy="9" r="3" fill="none" stroke="#667" stroke-width="2"/><circle cx="10.500" cy="4.500" r="2.500" fill="none" stroke="#789" stroke-width="1.7"/></svg>Properties</button>
      <button class="tab"><svg viewBox="0 0 14 14"><path d="M2 13l8-9" stroke="#222" stroke-width="2"/><path d="M12 13L5 6" stroke="#6a5a20" stroke-width="2"/><path d="M1 5l4-4 4 1-4 5zM10 1q0 4 4 3l-2 3-4-2z" fill="#222"/></svg>Tool properties</button></div>

    <div class="pane-head"><h2>Layers</h2><button class="text-btn">New</button>
      <button class="ico" aria-label="Float"><svg viewBox="0 0 12 12"><use href="#float"/></svg></button><button class="ico" aria-label="Pin"><svg viewBox="0 0 12 12"><use href="#pin"/></svg></button><button class="ico" aria-label="Close pane"><svg viewBox="0 0 12 12"><use href="#cls"/></svg></button></div>
    <ul class="layers">
      <li><i class="check"></i><svg viewBox="0 0 15 12"><use href="#eye"/></svg><svg viewBox="0 0 15 13"><use href="#lock"/></svg><span>main graphics layer</span></li>
      <li class="active"><svg class="check" viewBox="0 0 14 12"><path d="M.5.5h13v11H.5z" fill="#fff" stroke="#7a98b8"/><path d="M3 6l3 3 5-7" fill="none" stroke="#1d8a35" stroke-width="2"/></svg><svg viewBox="0 0 15 12"><use href="#eye"/></svg><svg viewBox="0 0 15 13"><use href="#lock"/></svg><span>object_disposal 1.str</span></li>
    </ul>
  </aside>

  <section class="center">
    <div class="viewport">
      <svg viewBox="249 156 1004 369" preserveAspectRatio="none" role="img" aria-label="Profile section">
        <g fill="none" stroke="#f2f2f2" shape-rendering="crispEdges">
          <polyline points="295,401 300,398 312,399 315,398 330,398 345,399 355,399 362,401 370,402 382,402 390,400 395,397 400,392 407,390 415,388 430,387 455,387 470,389 485,391 520,392 537,395 550,398 565,401 580,403 618,403 625,402 635,402 640,403 660,402 667,398 675,396 700,395 727,395 733,391 740,386 755,386 775,384 785,382 816,382 820,380 835,376 838,372 850,367 862,367 865,366 878,367 890,363 905,361 915,358 920,356 931,354 945,344 957,336 967,337 975,333 978,327 988,326 995,319 1016,317 1021,314 1034,309 1045,307 1060,302 1090,292"/>
          <polyline points="537,395 546,388 550,388 562,380 566,379 578,372 582,371 594,364 599,363 610,356 615,355 626,348 631,347 644,339 649,338 661,331 666,330 677,323 682,322 693,315 697,314 710,306 716,305 730,298 735,298 1023,313"/>
        </g>
      </svg>
    </div>
    <div class="log">
      <div class="log-lines">
        <p>Joining contour segments for level 0.000</p>
        <p>Processing pit_topo.dtm</p>
        <p>Drawing commencing - Please wait</p>
        <p>Processing pit_topo_distes.dtm</p>
        <p>Drawing commencing - Please wait</p>
        <p>Saved object_disposal 1.str successfully</p>
        <p>Processing object_disposal 1.str</p>
        <p>Drawing commencing - Please wait</p>
      </div>
      <div class="vscroll"><svg viewBox="0 0 11 11"><use href="#up"/></svg><i class="low"></i><svg viewBox="0 0 11 11"><use href="#dn"/></svg></div>
    </div>
    <input class="command" aria-label="Command" value="PLAN (P)">
  </section>

  <aside class="side"><button class="side-tab"><svg viewBox="0 0 16 16"><path d="M1 8l3-6 3 6-3 6zM5 8l3-6 3 6-3 6zM9 8l3-6 3 6-3 6z" fill="#5a90ec" stroke="#2c5cc0"/></svg><span>Planes</span></button></aside>
</main>

<footer class="status">
  <span class="coord"><b class="y">Y</b>9626740.497</span>
  <span class="coord"><b class="x">X</b>426585.026</span>
  <span class="coord"><b class="z">Z</b>186.390</span>
  <button class="cell">Str = 1</button><button class="cell">0.000%</button>
  <span class="mode">3D</span><span class="mode">Plan</span><span class="mode">Dynamic</span>
</footer>

<div class="taskbar">
  <button class="start" aria-label="Start"><svg viewBox="0 0 16 16"><path d="M0 2l7-1v6.500H0zM8 1l8-1v7.500H8zM0 8.500h7V15l-7-1zM8 8.500h8V16l-8-1z" fill="#f2f2f2"/></svg></button>
  <div class="search">
    <svg class="lens" viewBox="0 0 16 18"><circle cx="10" cy="6" r="5" fill="none" stroke="#333" stroke-width="1.3"/><path d="M6.500 10L1 16.500" stroke="#333" stroke-width="1.5"/></svg>
    <input aria-label="Search" placeholder="Type here to search">
    <svg class="whale" viewBox="0 0 60 36"><path d="M1 6q8-5 15 1 5 8 13 11 6 3 11 1 4-2 9 0l-3 4-5 1-2 7-4 2q-2-5-5-5-2 4-3 6l-5-1-3-7Q8 21 1 6z" fill="#4f86c0"/><path d="M1 7q0 11 7 17l4 6q0-5 5-5Q8 16 1 7z" fill="#d3dff3"/><path d="M16 21l4 9 5 3 3-7z" fill="#27517f"/><circle cx="12" cy="11" r="1.3" fill="#123"/><path d="M24 8q7-6 16-3 8 3 12 8l6-1-2 4-3 4-4-4q-9 1-13-2l-5 4-1-5z" fill="#5d94cc"/><path d="M25 9q8 6 17 5-8-6-17-5z" fill="#d3dff3"/><circle cx="32" cy="7" r="1" fill="#123"/></svg>
  </div>
  <button class="task" aria-label="Task view"><svg viewBox="0 0 24 24"><path d="M5.500 4v3h9V4M5.500 20v-3h9v3M5.500 9.500h9v5h-9zM18 4v16" fill="none" stroke="#eee" stroke-width="1.2"/><path d="M17 9h3v3h-3z" fill="#eee"/></svg></button>
  <button class="task" aria-label="Store"><svg viewBox="0 0 24 24"><path d="M8 5V1h8v4" fill="none" stroke="#3fa9e8" stroke-width="1.5"/><rect x="1" y="4" width="22" height="19" rx="2" fill="#f7f7f7"/><path d="M7 8h4v4H7z" fill="#e8502a"/><path d="M12 8h4v4h-4z" fill="#7cb82f"/><path d="M7 13h4v4H7z" fill="#2f9ae8"/><path d="M12 13h4v4h-4z" fill="#f5b82a"/></svg></button>
  <button class="task" aria-label="Mail"><svg viewBox="0 0 24 24"><path d="M1 9l11-7 11 7v13H1z" fill="#1c5fa8"/><path d="M3 8h18v8H3z" fill="#fff"/><path d="M1 9l11 8 11-8v13H1z" fill="#35a4ec"/></svg></button>
  <button class="task open" aria-label="Zoom"><svg viewBox="0 0 24 24"><circle cx="12" cy="12" r="11.500" fill="#1c5cf0"/><text x="3.500" y="15.500" font-size="11" font-weight="bold" fill="#fff">zm</text></svg></button>
  <button class="task open" aria-label="Edge"><svg viewBox="0 0 24 24"><circle cx="12" cy="12" r="11.500" fill="#1f86d8"/><path d="M1 10Q4 0 13 .5 23 2 23.500 11q-1 6-8 5-4-1-1-4Q12 4 1 10z" fill="#46cf7c"/><path d="M9 12q0 7 7 9 4 0 6-3-6 9-14 4-5-6 1-10z" fill="#1456a8"/><path d="M10 13q4-3 4 0-1 4 5 4l-3 3q-6-1-6-7z" fill="#3d3b3a"/></svg></button>
  <button class="task open" aria-label="WhatsApp"><svg viewBox="0 0 24 24"><path d="M2 22l2-6A10 10 0 1 1 8 20z" fill="#3d3b3a" stroke="#3fcf66" stroke-width="2"/><path d="M8 7q-1 4 4 8 3 2 5 0l-2-3-2 1-2-3 1-2-2-3z" fill="#3fcf66"/></svg><b class="count">99+</b></button>
  <button class="task open" aria-label="File Explorer"><svg viewBox="0 0 24 24"><path d="M2 3h7l2 2h11v17H2z" fill="#f2b83a"/><path d="M2 8h20v14H2z" fill="#fbdc70"/><path d="M6 14h12v8h-3v-4H9v4H6z" fill="#4a9ad8"/></svg></button>
  <button class="task" aria-label="QGIS"><svg viewBox="0 0 24 24"><circle cx="11.500" cy="11.500" r="8.500" fill="none" stroke="#78a92c" stroke-width="4.500"/><path d="M13 13l9 9" stroke="#5a8a20" stroke-width="4"/><path d="M8 8l8 3-3 5z" fill="#f2a03a"/></svg></button>
  <button class="task" aria-label="Surpac section"><svg viewBox="0 0 24 24"><path d="M13 1h9v9h-9z" fill="#6a1c74"/><path d="M15 3h5v5" fill="none" stroke="#a04ab0"/><path d="M1 9l4 4 7 4h11v6H1z" fill="#8af59a" stroke="#1c5c2a"/><path d="M6 6q0 8 8 10-1-8-8-10z" fill="#fff"/></svg></button>
  <button class="task open" aria-label="Word"><svg viewBox="0 0 24 24"><path d="M9 3h14v18H9z" fill="#fff" stroke="#2b579a"/><path d="M16 7h5M16 10h5M16 13h5M16 16h5" stroke="#2b579a"/><path d="M1 3l13-2v22L1 21z" fill="#2b579a"/><text x="2.500" y="16" font-size="10" font-weight="bold" fill="#fff">W</text></svg></button>
  <button class="task open current" aria-label="Surpac"><svg viewBox="0 0 24 24"><path d="M2 6L18 1l4 16-6 5L5 20z" fill="#c8362c"/><path d="M6 7l6-2 1 6-6 1zM14 9l5-1 1 6-5 1zM7 14l6-1 1 5-5 1z" fill="#dc584e" stroke="#8c1c18"/></svg></button>
  <div class="tray">
    <svg class="news" viewBox="0 0 24 18"><path d="M1 1h19v16H1zM20 5h3v12h-4" fill="none" stroke="#eee" stroke-width="1.5"/><path d="M4 5h13M12 9h5M12 12h5M4.500 8.500h5v5h-5z" fill="none" stroke="#eee" stroke-width="1.5"/></svg>
    <svg viewBox="0 0 16 16"><path d="M3 11l5-5 5 5" fill="none" stroke="#eee" stroke-width="1.4"/></svg>
    <svg viewBox="0 0 16 16"><path d="M3 5h7v7H3zM10 8l3-2v5l-3-2M4 1.500q3-2 6 0M4 15q3 2 6 0" fill="none" stroke="#eee" stroke-width="1.2"/></svg>
    <svg viewBox="0 0 16 16"><rect x="5" y="0" width="6" height="10" rx="3" fill="#eee"/><path d="M3 7q0 5 5 5t5-5M8 12v3M5 15.500h6" fill="none" stroke="#eee" stroke-width="1.2"/></svg>
    <svg viewBox="0 0 16 16"><path d="M5 5h9v7H5M15 7v3" fill="none" stroke="#eee" stroke-width="1.3"/><path d="M1 2h4v4H1zM3 6v4h3" fill="none" stroke="#eee"/><path d="M7 7h3v3H7z" fill="#eee"/></svg>
    <svg viewBox="0 0 16 16"><path d="M2 15Q2 3 14 2M5 15q0-9 9-9.500M8 15q0-5 6-6M11 15q0-3 3-3" fill="none" stroke="#ddd"/></svg>
    <svg viewBox="0 0 16 16"><path d="M1 6h3l3-3v10L4 10H1z" fill="none" stroke="#eee"/><path d="M9 6q2 2 0 4M11 4q3 4 0 8M13 2q4 6 0 12" fill="none" stroke="#ddd"/></svg>
    <time class="clock"><span>8:21</span><span>07/06/2024</span></time>
    <div class="notes"><svg viewBox="0 0 18 18"><path d="M1 1h15v12H6l-3 3v-3H1z" fill="#f2f2f2"/><path d="M4 4h9M4 7h9M4 10h5" stroke="#444"/></svg><b>20</b></div>
    <div class="copilot"><svg viewBox="0 0 22 22"><path d="M7 1h7q3 0 4 5l3 9q0 4-4 4h-4L9 5z" fill="#b05ae0"/><path d="M7 1q4 0 2 8l-2 9q-6 2-6-3Q4 2 7 1z" fill="#2f9ae8"/><path d="M9 6h5l-3 12q-2 3-6 2 3-1 4-14z" fill="#f29a3a"/></svg><b>PRE</b></div>
  </div>
</div>
</body>
</html>
```
FILE: styles.css
```css
* { box-sizing: border-box; }
:root { --ui: "DejaVu Sans Condensed", "DejaVu Sans", sans-serif; --edge: #8e8e8e; }
body { margin: 0; height: 100vh; display: flex; flex-direction: column; overflow: hidden; background: #f7f7f7; color: #1c1c1c; font: 10px/13px var(--ui); }
button { margin: 0; padding: 0; border: 0; background: none; font: inherit; color: inherit; }
h1, h2, p, ul { margin: 0; padding: 0; font: inherit; list-style: none; }
svg { display: block; flex: none; }
.defs { width: 0; height: 0; position: absolute; }
.grip { flex: none; width: 2px; height: 20px; background: repeating-linear-gradient(#888 0 2px, transparent 2px 4px); }

.titlebar { position: relative; flex: none; display: flex; align-items: center; height: 22px; background: #fdfdfd; }
.app-icon { width: 14px; height: 14px; margin: 0 6px 0 2px; }
.title { flex: 1; font: 11px/22px Roboto, sans-serif; color: #111; white-space: nowrap; }
.win-btn { width: 42px; height: 20px; align-self: flex-start; display: grid; place-items: center; }
.win-btn svg { width: 12px; height: 12px; }
.win-btn.close { background: #e81123; margin-right: 2px; }
.pointer { position: absolute; right: 33px; top: 7px; width: 12px; height: 18px; }

.menubar { flex: none; display: flex; align-items: center; gap: 11px; height: 22px; padding-left: 4px; font: 11px/16px Roboto, sans-serif; color: #111; background: linear-gradient(90deg, #f1f1f1, #fcfcfc); }
.menubar .grip { height: 12px; margin-right: -2px; }

.toolrow { flex: none; display: flex; gap: 8px; height: 28px; padding-left: 4px; overflow: hidden; }
.group { flex: none; display: flex; align-items: center; height: 27px; border-bottom: 1px solid #b0b0b0; background: linear-gradient(#fff, #f0f0f0); }
.group .grip { margin-right: 4px; }
.group.roomy { padding-right: 3px; }
.group.far { margin-right: 6px; }
.group button { width: 24px; height: 24px; }
.group button svg { width: 24px; height: 24px; padding: 1px; font-family: "Liberation Sans", sans-serif; }
.group .drop, .group .drop svg { width: 18px; }
.group .on { background: #f6c38a; outline: 1px solid #b98a58; outline-offset: -1px; }
.sep { flex: none; width: 1px; height: 20px; margin: 0 3px 0 2px; background: #b4b4b4; }
.more { width: 11px; height: 26px; margin-left: -5px; background: #a2a2a2; border-radius: 0 4px 4px 0; font-size: 8px; line-height: 12px; text-align: center; overflow: hidden; }

.sliders { flex: none; display: flex; align-items: center; height: 24px; padding-left: 4px; }
.sliders label { margin-left: 9px; }
.sliders input + label { min-width: 59px; }
.sliders input { appearance: none; width: 34px; height: 18px; margin: 0 3px 0 12px; background: linear-gradient(#222, #222) center / 100% 2px no-repeat; }
.sliders input::-webkit-slider-thumb { appearance: none; width: 10px; height: 18px; background: #f0f0f0; border: 1px solid #ddd; border-right: 2px solid #111; border-bottom: 2px solid #111; }

.work { flex: 1; min-height: 0; display: flex; }
.dock { flex: none; width: 243px; display: flex; flex-direction: column; border-top: 1px solid #bbb; }
.pane-head { flex: none; display: flex; align-items: center; height: 23px; padding: 0 11px 0 6px; background: linear-gradient(#fdfdfd, #e4e4e4); }
.pane-head h2 { flex: 1; }
.text-btn { height: 18px; padding: 0 3px; border-right: 1px solid #888; border-bottom: 1px solid #999; }
.ico { width: 12px; height: 12px; margin-left: 4px; }
.ico + .ico { margin-left: 7px; }
.ico svg { width: 12px; height: 12px; }
.combo { flex: none; display: flex; align-items: center; height: 19px; margin: 1px 0 0 1px; border: 1px solid var(--edge); background: #e4e4e4; }
.combo select { flex: 1; appearance: none; border: 0; background: none; padding: 0 2px; font: 11px/15px var(--ui); color: #222; }
.combo svg { width: 12px; height: 10px; margin-right: 3px; }
.tree { flex: 1; min-height: 0; margin-left: 1px; display: flex; flex-direction: column; border: 1px solid var(--edge); border-top: 0; background: #fff; }
.tree-body { flex: 1; min-height: 0; display: flex; overflow: hidden; }
.tree ul { flex: 1; padding-left: 79px; background: repeating-linear-gradient(90deg, transparent 0 7px, #bbb 7px 8px, transparent 8px 18px) 0 0 / 80px 100% no-repeat; }
.tree li { display: flex; align-items: center; height: 15px; }
.tree li::before { content: ""; width: 10px; border-top: 1px dotted #999; margin-right: 1px; }
.tree li svg { width: 14px; height: 14px; margin-right: 2px; }
.tree li span { padding: 1px; line-height: 12px; white-space: nowrap; }
.tree .selected span { background: #0a78d4; color: #fff; }
.vscroll { flex: none; width: 16px; display: flex; flex-direction: column; align-items: center; justify-content: space-between; padding: 3px 0; background: #f5f5f5; }
.vscroll svg, .hscroll svg { width: 11px; height: 11px; }
.vscroll i { width: 14px; background: #cdcdcd; }
.vscroll .tick { height: 8px; margin-top: 14px; }
.vscroll .block { height: 17px; margin-bottom: 9px; }
.vscroll .low { height: 32px; margin-top: auto; margin-bottom: 3px; }
.hscroll { flex: none; display: flex; align-items: center; height: 15px; padding: 0 18px 0 3px; background: #f3f3f3; }
.hscroll i { width: 62px; height: 13px; margin: 0 auto 0 2px; background: #cdcdcd; }
.tabs { flex: none; display: flex; height: 20px; margin-bottom: 2px; }
.desc + .tabs { margin-bottom: 3px; }
.slant { width: 24px; height: 19px; }
.tab { display: flex; align-items: center; gap: 5px; height: 19px; padding: 0 7px 0 4px; border: 1px solid #aaa; border-width: 0 1px 1px 0; border-radius: 0 0 3px 3px; }
.tab + .tab { padding-left: 8px; }
.tab svg { width: 14px; height: 14px; }
.props { flex: none; display: flex; height: 60px; margin-left: 1px; border: 1px solid var(--edge); overflow: hidden; background: #fff; }
.props table { flex: 1; border-collapse: collapse; table-layout: fixed; }
.props th { text-align: left; color: #666; font-size: 11px; background: #eee; height: 14px; padding: 0 0 0 4px; }
.props th svg { display: inline-block; width: 9px; height: 9px; margin-right: 4px; }
.props td { height: 15px; padding: 0 0 0 18px; white-space: nowrap; }
.props td + td { padding: 0; width: 111px; }
.props .dim { color: #777; }
.desc { flex: none; display: flex; flex-direction: column; height: 30px; margin: 3px 0 0 1px; padding: 1px; border: 1px solid var(--edge); background: #fff; }
.desc b { font-size: 11px; }
.layers { flex: none; height: 64px; margin: 1px 0 3px 1px; border: 1px solid var(--edge); background: #fff; }
.layers li { display: flex; align-items: center; gap: 2px; height: 20px; padding-left: 1px; }
.layers svg { width: 15px; height: 13px; }
.layers .check { width: 14px; }
.layers span { margin-left: 10px; }
.layers .active { font-weight: bold; font-style: italic; }

.center { flex: 1; min-width: 0; display: flex; flex-direction: column; margin-left: 3px; }
.viewport { flex: 1; min-height: 0; margin: 2px 2px 4px 0; border: 3px solid #27a243; background: #000; display: flex; }
.viewport svg { width: 100%; height: 100%; }
.log { flex: none; display: flex; height: 102px; border: 1px solid var(--edge); background: #fff; }
.log-lines { flex: 1; display: flex; flex-direction: column; justify-content: flex-end; overflow: hidden; padding: 0 0 1px 1px; }
.log-lines p { flex: none; height: 13px; }
.command { flex: none; height: 20px; margin-bottom: 3px; border: 1px solid var(--edge); background: #fff; padding: 0 1px; font: 10px/13px var(--ui); color: #222; }
.side { flex: none; width: 23px; padding: 3px 0 0 3px; }
.side-tab { width: 22px; height: 65px; display: flex; flex-direction: column; align-items: center; gap: 5px; padding-top: 2px; border: 1px solid #aaa; border-radius: 4px 0 0 4px; background: #f3f3f3; }
.side-tab svg { width: 15px; height: 15px; }
.side-tab span { writing-mode: vertical-rl; }

.status { flex: none; display: flex; align-items: center; height: 26px; border-top: 2px solid #b5b5b5; border-bottom: 1px solid #ddd; background: #f2f2f2; }
.coord { display: flex; align-items: center; gap: 4px; width: 107px; }
.coord + .coord { border-left: 1px solid #aaa; }
.coord b { width: 15px; text-align: center; font: bold 18px/20px "Liberation Sans", sans-serif; }
.coord .y { color: #3a9a3a; }
.coord .x { color: #d8502f; }
.coord .z { color: #4a74c8; }
.cell { height: 17px; padding: 0 1px; border-right: 2px solid #999; border-bottom: 1px solid #999; border-left: 1px solid #ccc; }
.mode { padding: 0 6px 0 7px; border-right: 1px solid #aaa; }

.taskbar { flex: none; display: flex; height: 37px; background: linear-gradient(90deg, #3d3a39 0 52%, #3f3f3e 70%, #3a4335 84%, #373b34 92%, #3a3a3a); color: #eee; }
.start { width: 45px; display: grid; place-items: center; background: #3a4244; }
.start svg { width: 16px; height: 16px; }
.search { flex: none; width: 322px; display: flex; align-items: center; background: #f2f2f2; }
.lens { width: 16px; height: 18px; margin: 0 10px 0 11px; }
.search input { flex: 1; min-width: 0; border: 0; padding: 0; background: none; font: 14px/20px Roboto, sans-serif; }
.search input::placeholder { color: #3a3a3a; opacity: 1; }
.whale { width: 60px; height: 36px; margin-right: 7px; }
.task { position: relative; width: 46px; display: grid; place-items: center; }
.task svg { width: 22px; height: 22px; font-family: "Liberation Sans", sans-serif; }
.task.open { background: linear-gradient(#76b0de, #76b0de) bottom / 38px 3px no-repeat; }
.task.current { background: linear-gradient(#76b0de, #76b0de) bottom / 46px 3px no-repeat, #5c5b5a; }
.count { position: absolute; left: 16px; bottom: 4px; padding: 0 3px; border: 1px solid #999; border-radius: 8px; background: #333; font: bold 10px/13px Roboto, sans-serif; }
.tray { flex: 1; display: flex; align-items: center; justify-content: flex-end; gap: 7px; padding-right: 14px; }
.tray svg { width: 16px; height: 16px; }
.tray .news { width: 24px; height: 18px; margin-right: 11px; }
.clock { display: flex; flex-direction: column; align-items: center; margin: 0 9px 0 2px; font: 10px/17px Roboto, sans-serif; }
.notes, .copilot { position: relative; width: 26px; height: 24px; }
.tray .notes svg { width: 18px; height: 18px; }
.notes b { position: absolute; left: 6px; top: 7px; padding: 0 2px; border: 1px solid #999; border-radius: 9px; background: #444; font: bold 11px/15px Roboto, sans-serif; }
.copilot { margin-left: 4px; }
.tray .copilot svg { width: 22px; height: 22px; }
.copilot b { position: absolute; left: 5px; top: 13px; padding: 0 1px; background: #e8b03a; color: #222; font: bold 8px/9px Roboto, sans-serif; }
```
